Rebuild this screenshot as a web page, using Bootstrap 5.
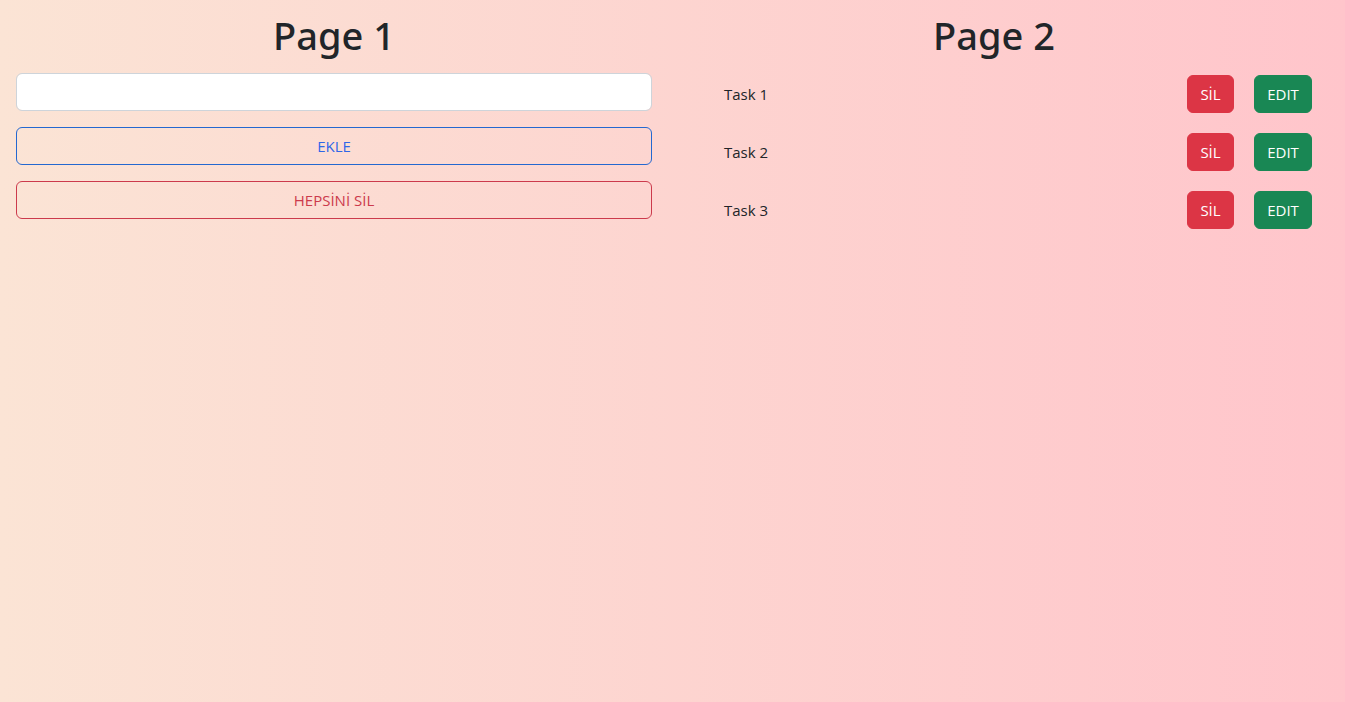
<!DOCTYPE html>
<html lang="tr">
<head>
<meta charset="utf-8">
<meta name="viewport" content="width=device-width, initial-scale=1">
<title>Tasks</title>
<link href="https://cdn.jsdelivr.net/npm/bootstrap@5.3.0/dist/css/bootstrap.min.css" rel="stylesheet">
<style>
  body {
    font-family: "Open Sans", "Noto Sans", sans-serif;
    background: linear-gradient(to right, #fbe4d5, #ffc5cb);
  }
  .board { padding: 11px 21px 0 4px; }
  h1 { font-family: "Noto Sans", "Open Sans", sans-serif; font-size: 38px; line-height: 48px; font-weight: 500; margin-bottom: 14px; }
  .btn, .task-name { font-size: 15px; line-height: 24px; }
  .btn-outline-primary { --bs-btn-color: #2f66e8; --bs-btn-border-color: #2468d0; }
  .btn-outline-danger { --bs-btn-color: #cc3a4c; --bs-btn-border-color: #cc3a4c; }
  .field { height: 38px; border-color: #ced4da; }
  .tasks { padding: 2px 0 0 48px; }
  .tasks, .actions { gap: 20px; }
  .btn-delete { width: 47px; }
  .btn-edit { width: 58px; }
  .actions .btn { padding-left: 0; padding-right: 0; }
</style>
</head>
<body class="min-vh-100">
<main class="container-fluid board">
  <div class="row m-0">
    <section class="col-6">
      <h1 class="text-center">Page 1</h1>
      <form class="d-grid gap-3">
        <input type="text" class="form-control field" aria-label="Task">
        <button type="button" class="btn btn-outline-primary">EKLE</button>
        <button type="button" class="btn btn-outline-danger">HEPSİNİ SİL</button>
      </form>
    </section>
    <section class="col-6">
      <h1 class="text-center">Page 2</h1>
      <ul class="list-unstyled d-flex flex-column mb-0 tasks">
        <li class="d-flex justify-content-between align-items-center">
          <span class="task-name">Task 1</span>
          <div class="d-flex actions">
            <button type="button" class="btn btn-danger btn-delete">SİL</button>
            <button type="button" class="btn btn-success btn-edit">EDIT</button>
          </div>
        </li>
        <li class="d-flex justify-content-between align-items-center">
          <span class="task-name">Task 2</span>
          <div class="d-flex actions">
            <button type="button" class="btn btn-danger btn-delete">SİL</button>
            <button type="button" class="btn btn-success btn-edit">EDIT</button>
          </div>
        </li>
        <li class="d-flex justify-content-between align-items-center">
          <span class="task-name">Task 3</span>
          <div class="d-flex actions">
            <button type="button" class="btn btn-danger btn-delete">SİL</button>
            <button type="button" class="btn btn-success btn-edit">EDIT</button>
          </div>
        </li>
      </ul>
    </section>
  </div>
</main>
<script src="https://cdn.jsdelivr.net/npm/bootstrap@5.3.0/dist/js/bootstrap.bundle.min.js"></script>
</body>
</html>
